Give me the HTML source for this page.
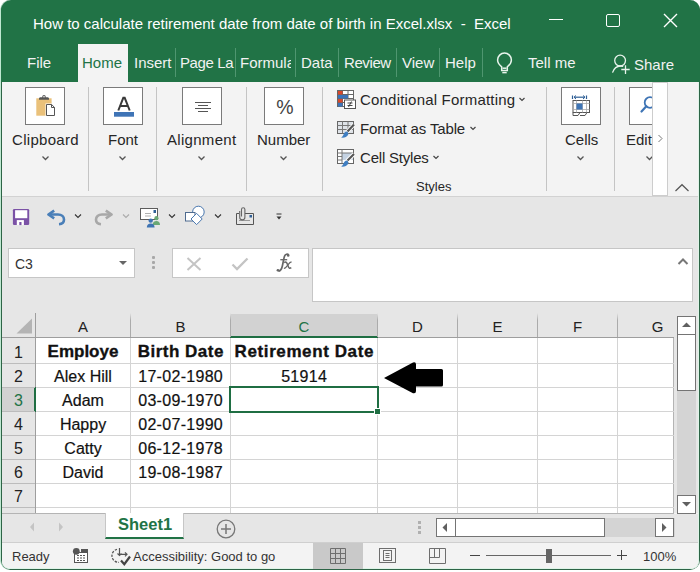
<!DOCTYPE html>
<html><head><meta charset="utf-8">
<style>
*{margin:0;padding:0;box-sizing:border-box}
html,body{width:700px;height:572px;overflow:hidden;background:#fff;font-family:"Liberation Sans",sans-serif}
.a{position:absolute}
.t{position:absolute;white-space:nowrap;line-height:1}
#frame{position:absolute;left:0;top:0;width:700px;height:570px;border-radius:10px;overflow:hidden;background:#2d6446;border-left:1px solid #bfe8d1}
#inner{position:absolute;left:1px;top:0;width:697px;height:569px;border-radius:0 0 7px 7px;overflow:hidden;background:#f3f3f3;border-right:1px solid #dff4e8;border-bottom:1px solid #dff4e8}
#titlebar{position:absolute;left:0;top:0;width:700px;height:82px;background:#217346}
#title{color:#fff;font-size:15px}
.tab{color:#f2f2f2;font-size:15px}
.sep{position:absolute;width:1px;background:#4f9670;top:48px;height:29px}
.rsep{position:absolute;width:1px;background:#c4c4c4;top:87px;height:104px}
.ibox{position:absolute;width:40px;height:38px;border:1px solid #7a7a7a;background:#fff;top:87px}
.ibox svg{position:absolute;left:0;top:0}
.rl{font-size:15px;color:#262626}
.hl{font-size:15px;color:#222;text-align:center}
.rh{font-size:16px;color:#222;text-align:center}
.cell{font-size:16px;color:#111;text-align:center;-webkit-text-stroke:0.2px #111}
.b{font-weight:bold;font-size:17px;-webkit-text-stroke:0.35px #111}
.ls{letter-spacing:0.3px;text-indent:0.3px}
.vl{position:absolute;width:1px;background:#d4d4d4}
.hln{position:absolute;height:1px;background:#d4d4d4}
</style></head><body>
<div id="frame">
<div id="inner">
</div>
</div>

<!-- ===== TITLE BAR ===== -->
<div class="a" style="left:1px;top:0;width:699px;height:82px;background:#217346;border-radius:10px 10px 0 0"></div>
<div class="t" id="title" style="left:33px;top:16px">How to calculate retirement date from date of birth in Excel.xlsx&nbsp; -&nbsp; Excel</div>
<div class="a" style="left:549px;top:19px;width:14px;height:1px;background:#fff"></div>
<div class="a" style="left:606px;top:14px;width:14px;height:13px;border:1.4px solid #fff;border-radius:2px"></div>
<svg class="a" style="left:663px;top:13px" width="15" height="15" viewBox="0 0 15 15"><path d="M1 1L14 14M14 1L1 14" stroke="#fff" stroke-width="1.4"/></svg>

<!-- tabs -->
<div class="t tab" style="left:27px;top:55px">File</div>
<div class="a" style="left:78px;top:44px;width:50px;height:39px;background:#f3f3f3"></div>
<div class="t tab" style="left:82px;top:55px;color:#217346">Home</div>
<div class="t tab" style="left:134px;top:55px">Insert</div>
<div class="sep" style="left:175px"></div>
<div class="t tab" style="left:180px;top:55px;letter-spacing:-0.4px">Page La</div>
<div class="sep" style="left:235px"></div>
<div class="t tab" style="left:240px;top:55px;width:51px;overflow:hidden">Formulas</div>
<div class="sep" style="left:295px"></div>
<div class="t tab" style="left:301px;top:55px">Data</div>
<div class="sep" style="left:338px"></div>
<div class="t tab" style="left:344px;top:55px;letter-spacing:-0.4px">Review</div>
<div class="sep" style="left:396px"></div>
<div class="t tab" style="left:402px;top:55px">View</div>
<div class="sep" style="left:439px"></div>
<div class="t tab" style="left:445px;top:55px">Help</div>
<div class="sep" style="left:482px"></div>
<svg class="a" style="left:490px;top:48px" width="30" height="30" viewBox="0 0 30 30" fill="none" stroke="#e8f4ec" stroke-width="1.5">
  <path d="M11.7 22.5 L11.7 18.8 C9.2 16.8 7.6 14.6 7.6 12 A6.9 6.9 0 0 1 21.4 12 C21.4 14.6 19.8 16.8 17.3 18.8 L17.3 22.5 Z"/>
  <path d="M12.5 20.2 L16.5 20.2"/>
  <path d="M12.3 24.6 L16.7 24.6"/>
</svg>
<div class="t tab" style="left:528px;top:55px">Tell me</div>
<svg class="a" style="left:605px;top:50px" width="30" height="30" viewBox="0 0 30 30" fill="none" stroke="#e8f4ec" stroke-width="1.3">
  <circle cx="15.1" cy="10.6" r="5.4"/>
  <path d="M7.5 22.6 C9 18.5 12 16 15.5 16 C16.5 16 17.4 16.2 18.2 16.5"/>
  <path d="M16.3 19.5 L24.7 19.5 M20.5 15.2 L20.5 23.9"/>
</svg>
<div class="t tab" style="left:634px;top:57px">Share</div>

<!-- ===== RIBBON ===== -->
<div class="a" style="left:2px;top:82px;width:696px;height:114px;background:#f3f3f3"></div>
<div class="a" style="left:2px;top:196px;width:696px;height:1px;background:#d2d2d2"></div>

<div class="ibox" style="left:25px">
  <svg width="40" height="38" viewBox="0 0 40 38">
    <rect x="10.3" y="10.3" width="15.3" height="17.4" fill="#eac17a"/>
    <path d="M13 11.8 L13 10.6 C13 9.6 14 9.2 15 9.2 L16.3 9.2 L16.3 8.6 A1.7 1.7 0 0 1 19.7 8.6 L19.7 9.2 L21 9.2 C22 9.2 23 9.6 23 10.6 L23 11.8 Z" fill="#555"/>
    <circle cx="18" cy="8.7" r="0.8" fill="#fff"/>
    <path d="M19.5 15.5 L26 15.5 L29.5 19 L29.5 28.5 L19.5 28.5 Z" fill="#fff"/>
    <path d="M20.5 16.5 L25.6 16.5 L28.5 19.4 L28.5 27.5 L20.5 27.5 Z" fill="#fff" stroke="#555" stroke-width="1"/>
    <path d="M25.5 16.5 L25.5 19.5 L28.5 19.5" fill="none" stroke="#555" stroke-width="1"/>
  </svg>
</div>
<div class="t rl" style="left:12px;top:132px;letter-spacing:0.3px">Clipboard</div>
<svg class="a" style="left:41px;top:155px" width="9" height="6" viewBox="0 0 9 6"><path d="M1.5 1.5L4.5 4.5L7.5 1.5" fill="none" stroke="#555" stroke-width="1.3"/></svg>
<div class="rsep" style="left:88px"></div>

<div class="ibox" style="left:103px">
  <svg width="40" height="38" viewBox="0 0 40 38">
    <path d="M14.3 22.5L19.3 9.8H20.7L25.7 22.5M16.2 18H23.8" fill="none" stroke="#3a3a3a" stroke-width="2"/>
    <rect x="10" y="24" width="20" height="4.7" fill="#3f74b6"/>
  </svg>
</div>
<div class="t rl" style="left:108px;top:132px">Font</div>
<svg class="a" style="left:118px;top:155px" width="9" height="6" viewBox="0 0 9 6"><path d="M1.5 1.5L4.5 4.5L7.5 1.5" fill="none" stroke="#555" stroke-width="1.3"/></svg>
<div class="rsep" style="left:156px"></div>

<div class="ibox" style="left:182px">
  <svg width="40" height="38" viewBox="0 0 40 38" stroke="#555" stroke-width="1">
    <path d="M12 14.5H28M15 17.5H25M12 20.5H28M15 23.5H25"/>
  </svg>
</div>
<div class="t rl" style="left:167px;top:132px;letter-spacing:0.3px">Alignment</div>
<svg class="a" style="left:197px;top:155px" width="9" height="6" viewBox="0 0 9 6"><path d="M1.5 1.5L4.5 4.5L7.5 1.5" fill="none" stroke="#555" stroke-width="1.3"/></svg>
<div class="rsep" style="left:246px"></div>

<div class="ibox" style="left:264px">
  <svg width="40" height="38" viewBox="0 0 40 38">
    <text x="20" y="25.8" font-family="Liberation Sans" font-size="19.5" fill="#444" text-anchor="middle">%</text>
  </svg>
</div>
<div class="t rl" style="left:257px;top:132px">Number</div>
<svg class="a" style="left:279px;top:155px" width="9" height="6" viewBox="0 0 9 6"><path d="M1.5 1.5L4.5 4.5L7.5 1.5" fill="none" stroke="#555" stroke-width="1.3"/></svg>
<div class="rsep" style="left:322px"></div>

<!-- styles -->
<svg class="a" style="left:336px;top:89px" width="21" height="21" viewBox="0 0 21 21">
  <rect x="1.5" y="1.5" width="16" height="16" fill="#fff" stroke="#666"/>
  <path d="M1.5 5.5H17.5M1.5 9.5H17.5M1.5 13.5H8M6.5 1.5V17.5M12 1.5V9" stroke="#666" fill="none"/>
  <rect x="2" y="2" width="4.5" height="3.5" fill="#d9472b"/>
  <rect x="2" y="6" width="10" height="3.5" fill="#3b73b9"/>
  <rect x="2" y="10" width="4.5" height="3.5" fill="#d9472b"/>
  <rect x="2" y="14" width="4.5" height="3.5" fill="#3b73b9"/>
  <rect x="8.5" y="11" width="11" height="8.5" fill="#fff" stroke="#555"/>
  <path d="M11.5 14H16.5M11.5 16.5H16.5M15.5 12.5L12.5 18" stroke="#333" stroke-width="0.9"/>
</svg>
<div class="t rl" style="left:360px;top:92px;letter-spacing:0.2px">Conditional Formatting</div>
<svg class="a" style="left:518px;top:97px" width="8" height="5" viewBox="0 0 8 5"><path d="M1.5 1L4 3.5L6.5 1" fill="none" stroke="#444" stroke-width="1.2"/></svg>

<svg class="a" style="left:336px;top:120px" width="21" height="19" viewBox="0 0 21 19">
  <rect x="1.5" y="1.5" width="16" height="12" fill="#dfe3e8" stroke="#666"/>
  <path d="M1.5 5.5H17.5M1.5 9.5H17.5M6.5 1.5V13.5M12 1.5V13.5" stroke="#777" fill="none"/>
  <path d="M18 4.5L11 12" stroke="#fff" stroke-width="4"/>
  <path d="M18 4.5L11.5 11.5" stroke="#555" stroke-width="2.2"/>
  <path d="M11 11.5C9 11.5 8 13 7.5 14.5C7 16 6 17 5 17.5C8 18 11 17 12 15C12.6 14 12.4 12.4 11 11.5Z" fill="#3f7ec1"/>
</svg>
<div class="t rl" style="left:360px;top:121px;letter-spacing:-0.15px">Format as Table</div>
<svg class="a" style="left:469px;top:126px" width="8" height="5" viewBox="0 0 8 5"><path d="M1.5 1L4 3.5L6.5 1" fill="none" stroke="#444" stroke-width="1.2"/></svg>

<svg class="a" style="left:336px;top:148px" width="21" height="20" viewBox="0 0 21 20">
  <rect x="1.5" y="1.5" width="16" height="14" fill="#fff" stroke="#666"/>
  <rect x="6" y="5" width="11" height="7" fill="#c5d3e3"/>
  <path d="M1.5 5H17.5M1.5 8.5H6M1.5 12H6M6 1.5V15.5M12 12V15.5" stroke="#777" fill="none"/>
  <path d="M18 6L11 13" stroke="#fff" stroke-width="4"/>
  <path d="M18 6L11.5 12.5" stroke="#555" stroke-width="2.2"/>
  <path d="M11 12.5C9 12.5 8 14 7.5 15.5C7 17 6 18 5 18.5C8 19 11 18 12 16C12.6 15 12.4 13.4 11 12.5Z" fill="#3f7ec1"/>
</svg>
<div class="t rl" style="left:360px;top:150px;letter-spacing:-0.2px">Cell Styles</div>
<svg class="a" style="left:432px;top:155px" width="8" height="5" viewBox="0 0 8 5"><path d="M1.5 1L4 3.5L6.5 1" fill="none" stroke="#444" stroke-width="1.2"/></svg>
<div class="t rl" style="left:416px;top:180px;font-size:13px">Styles</div>
<div class="rsep" style="left:546px"></div>

<div class="ibox" style="left:561px">
  <svg style="left:-1px;top:-1px" width="40" height="38" viewBox="0 0 40 38">
    <path d="M11.5 8.5V12M25.5 8.5V12" stroke="#2f5f96" stroke-width="1.2"/>
    <path d="M13 10.2H24" stroke="#2f5f96" stroke-width="1.2"/>
    <path d="M13 10.2L15 8.5M13 10.2L15 12M24 10.2L22 8.5M24 10.2L22 12" stroke="#2f5f96" stroke-width="1"/>
    <rect x="12" y="13.5" width="16.5" height="12" fill="#fff" stroke="#555"/>
    <path d="M12 16.5H28.5M12 22.5H28.5M15.5 13.5V25.5M21.5 13.5V25.5M25.5 13.5V25.5" stroke="#aaa" stroke-width="0.8"/>
    <rect x="15.5" y="16.5" width="6" height="6" fill="#3f75b5"/>
    <path d="M12 25.5L12 28.5L17 28.5L19 25.5M19 28.5L24 28.5L26 25.5" stroke="#555" fill="none"/>
  </svg>
</div>
<div class="t rl" style="left:565px;top:132px">Cells</div>
<svg class="a" style="left:576px;top:155px" width="9" height="6" viewBox="0 0 9 6"><path d="M1.5 1.5L4.5 4.5L7.5 1.5" fill="none" stroke="#555" stroke-width="1.3"/></svg>
<div class="rsep" style="left:614px"></div>

<div class="ibox" style="left:629px;width:30px;border-right:none">
  <svg width="30" height="38" viewBox="0 0 30 38">
    <circle cx="20" cy="14.5" r="5.3" fill="none" stroke="#3f75b5" stroke-width="1.8"/>
    <path d="M16.3 18.3L11.5 23.5" stroke="#3f75b5" stroke-width="2.2" stroke-linecap="round"/>
  </svg>
</div>
<div class="t rl" style="left:626px;top:132px">Edit</div>
<svg class="a" style="left:645px;top:155px" width="9" height="6" viewBox="0 0 9 6"><path d="M1.5 1.5L4.5 4.5L7.5 1.5" fill="none" stroke="#555" stroke-width="1.3"/></svg>
<div class="a" style="left:652px;top:82px;width:16px;height:114px;background:#fff;border:1px solid #cdcdcd"></div>
<svg class="a" style="left:656px;top:133px" width="9" height="11" viewBox="0 0 9 11"><path d="M2.5 2L6 5.5L2.5 9" fill="none" stroke="#777" stroke-width="1"/></svg>
<svg class="a" style="left:673px;top:182px" width="18" height="11" viewBox="0 0 18 11"><path d="M2.5 9L9 2.7L15.5 9" fill="none" stroke="#555" stroke-width="1.2"/></svg>

<!-- ===== QAT / FORMULA ===== -->
<div class="a" style="left:2px;top:197px;width:696px;height:316px;background:#e6e6e6"></div>
<svg class="a" style="left:12px;top:208px" width="18" height="18" viewBox="0 0 18 18">
  <rect x="0.9" y="0.9" width="16.3" height="16.2" rx="1.3" fill="#7b52a6"/>
  <rect x="3.1" y="2.2" width="12.2" height="8" fill="#fff"/>
  <rect x="4.8" y="12.1" width="7.1" height="5" fill="#fff"/>
  <rect x="7.3" y="14" width="2.2" height="3.1" fill="#7b52a6"/>
</svg>
<svg class="a" style="left:45px;top:208px" width="22" height="19" viewBox="0 0 22 19">
  <path d="M9.2 2.6L3.4 6.5L9.2 10.4" fill="none" stroke="#4a7fb8" stroke-width="2.6" stroke-linejoin="round"/>
  <path d="M4 6.5H13C16.8 6.5 19 8.7 19 11.5C19 14.3 17 16 14 16.2" fill="none" stroke="#4a7fb8" stroke-width="2.6"/>
</svg>
<svg class="a" style="left:74px;top:213px" width="8" height="6" viewBox="0 0 8 6"><path d="M1 1.5L4 4.5L7 1.5" fill="none" stroke="#333" stroke-width="1.1"/></svg>
<svg class="a" style="left:93px;top:208px" width="22" height="19" viewBox="0 0 22 19">
  <path d="M12.8 2.6L18.6 6.5L12.8 10.4" fill="none" stroke="#a8a8a8" stroke-width="2.6" stroke-linejoin="round"/>
  <path d="M18 6.5H9C5.2 6.5 3 8.7 3 11.5C3 14.3 5 16 8 16.2" fill="none" stroke="#a8a8a8" stroke-width="2.6"/>
</svg>
<svg class="a" style="left:122px;top:213px" width="8" height="6" viewBox="0 0 8 6"><path d="M1 1.5L4 4.5L7 1.5" fill="none" stroke="#aaa" stroke-width="1.1"/></svg>
<svg class="a" style="left:138px;top:206px" width="24" height="22" viewBox="0 0 24 22">
  <rect x="2.5" y="2.5" width="17" height="11" fill="#fff" stroke="#5c5c5c"/>
  <path d="M7 7.5H13M7 10H13" stroke="#b0b0b0"/>
  <rect x="15.5" y="4" width="2.5" height="3" fill="#2f5f96"/>
  <circle cx="18.4" cy="12.2" r="2.1" fill="#6aa874"/>
  <path d="M14.6 19C14.6 16.3 16.2 15 18.4 15C20.6 15 22 16.3 22 19Z" fill="#6aa874"/>
  <circle cx="12.7" cy="14.6" r="2.2" fill="#3f74b3"/>
  <path d="M8.8 21.5C8.8 18.8 10.5 17.5 12.7 17.5C14.9 17.5 16.6 18.8 16.6 21.5Z" fill="#3f74b3"/>
</svg>
<svg class="a" style="left:168px;top:213px" width="8" height="6" viewBox="0 0 8 6"><path d="M1 1.5L4 4.5L7 1.5" fill="none" stroke="#333" stroke-width="1.1"/></svg>
<svg class="a" style="left:183px;top:205px" width="24" height="23" viewBox="0 0 24 23">
  <circle cx="15.4" cy="7" r="5.8" fill="#fff" stroke="#4a78b0" stroke-width="1"/>
  <rect x="2.5" y="7.5" width="9.5" height="8.5" fill="#fff" stroke="#4f6b8f" stroke-width="1"/>
  <path d="M13.6 8.4L19.2 14L13.6 19.6L8 14Z" fill="#fff" stroke="#4a78b0" stroke-width="1"/>
</svg>
<svg class="a" style="left:214px;top:213px" width="8" height="6" viewBox="0 0 8 6"><path d="M1 1.5L4 4.5L7 1.5" fill="none" stroke="#333" stroke-width="1.1"/></svg>
<svg class="a" style="left:234px;top:205px" width="22" height="21" viewBox="0 0 22 21">
  <path d="M5 8.5H2.5V19.5H19.5V8.5H11" fill="none" stroke="#555"/>
  <path d="M5 15.5H16" stroke="#999"/>
  <rect x="15.5" y="10" width="2.5" height="2.5" fill="#2f5f96"/>
  <path d="M7.5 11.5V4.5A1.7 1.7 0 0 1 10.9 4.5V12.3A2.6 2.6 0 0 1 5.7 12.3V6" fill="none" stroke="#666" stroke-width="1.1"/>
</svg>
<svg class="a" style="left:275px;top:212px" width="8" height="9" viewBox="0 0 8 9"><path d="M1.5 2H6.5" stroke="#333" stroke-width="1"/><path d="M1.5 4.5L4 7.5L6.5 4.5Z" fill="#333"/></svg>

<!-- name box -->
<div class="a" style="left:8px;top:248px;width:127px;height:30px;background:#fff;border:1px solid #c6c6c6"></div>
<div class="t" style="left:15px;top:257px;font-size:14px;color:#333">C3</div>
<svg class="a" style="left:118px;top:260px" width="10" height="6" viewBox="0 0 10 6"><path d="M1 1H9L5 5Z" fill="#666"/></svg>
<div class="a" style="left:152px;top:256px;width:3px;height:3px;border-radius:1px;background:#a8a8a8"></div>
<div class="a" style="left:152px;top:261px;width:3px;height:3px;border-radius:1px;background:#a8a8a8"></div>
<div class="a" style="left:152px;top:266px;width:3px;height:3px;border-radius:1px;background:#a8a8a8"></div>
<div class="a" style="left:172px;top:248px;width:137px;height:30px;background:#fff;border:1px solid #c6c6c6"></div>
<svg class="a" style="left:186px;top:257px" width="16" height="14" viewBox="0 0 16 14"><path d="M1.5 1L14.5 13M14.5 1L1.5 13" stroke="#c4c4c4" stroke-width="2"/></svg>
<svg class="a" style="left:231px;top:257px" width="18" height="14" viewBox="0 0 18 14"><path d="M1.5 7.5L6 12L16.5 1.5" fill="none" stroke="#c4c4c4" stroke-width="2.3"/></svg>
<svg class="a" style="left:272px;top:250px" width="24" height="24" viewBox="0 0 24 24">
  <path d="M16.6 5.2 C15.8 3.6 13.3 3.8 12.4 6.6 C11.7 8.8 11.1 12.6 10.3 16.3 C9.6 19.4 8.3 21.1 6.4 21.1" stroke="#666" stroke-width="1.7" fill="none"/>
  <circle cx="16.2" cy="5.5" r="1.3" fill="#666"/>
  <circle cx="5.9" cy="20.2" r="1.3" fill="#666"/>
  <path d="M8.3 9.7H15.2" stroke="#666" stroke-width="1.3"/>
  <path d="M12.2 12.6C13.6 11.6 14.8 12.1 15.4 14.2L16.5 17C17 18.3 17.9 18.6 19.3 17.6" stroke="#666" stroke-width="1.5" fill="none"/>
  <path d="M19.6 12.2C18.6 12 17.8 12.6 17.2 13.3L14.3 16.8C13.6 17.7 12.9 18.4 11.9 18.2" stroke="#666" stroke-width="1.3" fill="none"/>
</svg>
<div class="a" style="left:312px;top:248px;width:381px;height:54px;background:#fff;border:1px solid #c6c6c6"></div>
<svg class="a" style="left:677px;top:257px" width="12" height="9" viewBox="0 0 12 9"><path d="M1.5 7L6 2.5L10.5 7" fill="none" stroke="#777" stroke-width="2"/></svg>

<!-- ===== GRID ===== -->
<div class="a" style="left:36px;top:338px;width:638px;height:175px;background:#fff"></div>
<!-- headers -->
<div class="a" style="left:231px;top:314px;width:146px;height:23px;background:#d2d2d2"></div>
<div class="a" style="left:2px;top:387px;width:33px;height:24px;background:#d2d2d2"></div>
<svg class="a" style="left:16px;top:318px" width="17" height="16" viewBox="0 0 17 16"><path d="M16 0.5V15.5H0.5Z" fill="#b4b4b4"/></svg>
<div class="a" style="left:2px;top:337px;width:672px;height:1px;background:#9e9e9e"></div>
<div class="a" style="left:35px;top:313px;width:1px;height:200px;background:#9e9e9e"></div>
<div class="a" style="left:230px;top:336px;width:148px;height:2px;background:#1f6e43"></div>
<div class="a" style="left:34px;top:387px;width:2px;height:25px;background:#1f6e43"></div>
<!-- header col lines -->
<div class="a" style="left:130px;top:313px;width:1px;height:24px;background:linear-gradient(#e6e6e6,#ababab 30%)"></div>
<div class="a" style="left:230px;top:313px;width:1px;height:24px;background:linear-gradient(#e6e6e6,#ababab 30%)"></div>
<div class="a" style="left:377px;top:313px;width:1px;height:24px;background:linear-gradient(#e6e6e6,#ababab 30%)"></div>
<div class="a" style="left:457px;top:313px;width:1px;height:24px;background:linear-gradient(#e6e6e6,#ababab 30%)"></div>
<div class="a" style="left:537px;top:313px;width:1px;height:24px;background:linear-gradient(#e6e6e6,#ababab 30%)"></div>
<div class="a" style="left:617px;top:313px;width:1px;height:24px;background:linear-gradient(#e6e6e6,#ababab 30%)"></div>
<!-- row header lines -->
<div class="a" style="left:2px;top:363px;width:33px;height:1px;background:#bcbcbc"></div>
<div class="a" style="left:2px;top:387px;width:33px;height:1px;background:#bcbcbc"></div>
<div class="a" style="left:2px;top:411px;width:33px;height:1px;background:#bcbcbc"></div>
<div class="a" style="left:2px;top:435px;width:33px;height:1px;background:#bcbcbc"></div>
<div class="a" style="left:2px;top:459px;width:33px;height:1px;background:#bcbcbc"></div>
<div class="a" style="left:2px;top:483px;width:33px;height:1px;background:#bcbcbc"></div>
<div class="a" style="left:2px;top:507px;width:33px;height:1px;background:#bcbcbc"></div>
<!-- cell grid lines -->
<div class="vl" style="left:130px;top:338px;height:175px"></div>
<div class="vl" style="left:230px;top:338px;height:175px"></div>
<div class="vl" style="left:377px;top:338px;height:175px"></div>
<div class="vl" style="left:457px;top:338px;height:175px"></div>
<div class="vl" style="left:537px;top:338px;height:175px"></div>
<div class="vl" style="left:617px;top:338px;height:175px"></div>
<div class="vl" style="left:673px;top:338px;height:175px;background:#b4b4b4"></div>
<div class="hln" style="left:36px;top:363px;width:638px"></div>
<div class="hln" style="left:36px;top:387px;width:638px"></div>
<div class="hln" style="left:36px;top:411px;width:638px"></div>
<div class="hln" style="left:36px;top:435px;width:638px"></div>
<div class="hln" style="left:36px;top:459px;width:638px"></div>
<div class="hln" style="left:36px;top:483px;width:638px"></div>
<div class="hln" style="left:36px;top:507px;width:638px"></div>

<!-- col letters -->
<div class="t hl" style="left:36px;top:319px;width:94px">A</div>
<div class="t hl" style="left:131px;top:319px;width:99px">B</div>
<div class="t hl" style="left:231px;top:319px;width:146px;color:#217346">C</div>
<div class="t hl" style="left:378px;top:319px;width:79px">D</div>
<div class="t hl" style="left:458px;top:319px;width:79px">E</div>
<div class="t hl" style="left:538px;top:319px;width:79px">F</div>
<div class="t hl" style="left:618px;top:319px;width:79px">G</div>
<!-- row numbers -->
<div class="t rh" style="left:2px;top:345px;width:33px">1</div>
<div class="t rh" style="left:2px;top:369px;width:33px">2</div>
<div class="t rh" style="left:2px;top:393px;width:33px;color:#217346">3</div>
<div class="t rh" style="left:2px;top:417px;width:33px">4</div>
<div class="t rh" style="left:2px;top:441px;width:33px">5</div>
<div class="t rh" style="left:2px;top:465px;width:33px">6</div>
<div class="t rh" style="left:2px;top:489px;width:33px">7</div>

<!-- cells -->
<div class="t cell b" style="left:36px;top:343px;width:94px;overflow:hidden">Employe</div>
<div class="t cell b" style="left:131px;top:343px;width:99px;letter-spacing:0.5px;text-indent:0.5px">Birth Date</div>
<div class="t cell b" style="left:231px;top:343px;width:146px;letter-spacing:0.6px;text-indent:0.6px">Retirement Date</div>
<div class="t cell" style="left:36px;top:369px;width:94px">Alex Hill</div>
<div class="t cell" style="left:36px;top:393px;width:94px">Adam</div>
<div class="t cell" style="left:36px;top:417px;width:94px">Happy</div>
<div class="t cell" style="left:36px;top:441px;width:94px">Catty</div>
<div class="t cell" style="left:36px;top:465px;width:94px">David</div>
<div class="t cell ls" style="left:131px;top:369px;width:99px">17-02-1980</div>
<div class="t cell ls" style="left:131px;top:393px;width:99px">03-09-1970</div>
<div class="t cell ls" style="left:131px;top:417px;width:99px">02-07-1990</div>
<div class="t cell ls" style="left:131px;top:441px;width:99px">06-12-1978</div>
<div class="t cell ls" style="left:131px;top:465px;width:99px">19-08-1987</div>
<div class="t cell ls" style="left:231px;top:369px;width:146px">51914</div>
<!-- selection -->
<div class="a" style="left:229px;top:386px;width:150px;height:27px;border:2px solid #1f6e43"></div>
<div class="a" style="left:374px;top:408px;width:7px;height:7px;background:#1f6e43;border:1px solid #fff"></div>
<!-- arrow -->
<svg class="a" style="left:380px;top:358px" width="68" height="40" viewBox="0 0 68 40">
  <path d="M4 20 L33 4.5 Q36 3.5 36 6.5 L36 11 L61.5 11 Q63 11 63 12.5 L63 27 Q63 28.5 61.5 28.5 L36 28.5 L36 33 Q36 36 33 35.2 Z" fill="#000"/>
</svg>

<!-- v scroll -->
<div class="a" style="left:677px;top:316px;width:19px;height:19px;background:#fff;border:1px solid #747474"></div>
<svg class="a" style="left:681px;top:321px" width="11" height="7" viewBox="0 0 11 7"><path d="M1 6H10L5.5 1.5Z" fill="#606060"/></svg>
<div class="a" style="left:677px;top:335px;width:19px;height:161px;background:#d4d4d4"></div>
<div class="a" style="left:677px;top:334px;width:19px;height:57px;background:#fff;border:1px solid #747474"></div>
<div class="a" style="left:677px;top:495px;width:19px;height:19px;background:#fff;border:1px solid #747474;z-index:2"></div>
<svg class="a" style="z-index:3;left:681px;top:501px" width="11" height="7" viewBox="0 0 11 7"><path d="M1 1H10L5.5 5.5Z" fill="#606060"/></svg>

<!-- ===== SHEET TAB BAR ===== -->
<div class="a" style="left:2px;top:514px;width:696px;height:28px;background:#e6e6e6"></div>
<div class="a" style="left:2px;top:513px;width:672px;height:1px;background:#b4b4b4"></div>
<svg class="a" style="left:28px;top:521px" width="8" height="12" viewBox="0 0 8 12"><path d="M6 1.5L2 6L6 10.5Z" fill="#c4c4c4"/></svg>
<svg class="a" style="left:57px;top:521px" width="8" height="12" viewBox="0 0 8 12"><path d="M2 1.5L6 6L2 10.5Z" fill="#c4c4c4"/></svg>
<div class="a" style="left:105px;top:513px;width:79px;height:26px;background:#fff;border-left:1px solid #c6c6c6;border-right:1px solid #c6c6c6;border-bottom:2px solid #217346"></div>
<div class="t" style="left:118px;top:516px;font-size:16.5px;font-weight:bold;color:#217346">Sheet1</div>
<svg class="a" style="left:215px;top:519px" width="22" height="20" viewBox="0 0 22 20"><circle cx="11" cy="10" r="8.8" fill="none" stroke="#777" stroke-width="1.3"/><path d="M11 5V15M6 10H16" stroke="#777" stroke-width="1.5"/></svg>
<div class="a" style="left:418px;top:521px;width:3px;height:3px;background:#b0b0b0"></div>
<div class="a" style="left:418px;top:526px;width:3px;height:3px;background:#b0b0b0"></div>
<div class="a" style="left:418px;top:531px;width:3px;height:3px;background:#b0b0b0"></div>
<div class="a" style="left:436px;top:518px;width:239px;height:19px;background:#d4d4d4"></div>
<div class="a" style="left:436px;top:518px;width:20px;height:19px;background:#fff;border:1px solid #747474"></div>
<svg class="a" style="left:441px;top:522px" width="8" height="11" viewBox="0 0 8 11"><path d="M6 1L1.5 5.5L6 10Z" fill="#606060"/></svg>
<div class="a" style="left:455px;top:518px;width:150px;height:19px;background:#fff;border:1px solid #747474"></div>
<div class="a" style="left:655px;top:518px;width:19px;height:19px;background:#fff;border:1px solid #747474"></div>
<svg class="a" style="left:660px;top:522px" width="8" height="11" viewBox="0 0 8 11"><path d="M2 1L6.5 5.5L2 10Z" fill="#606060"/></svg>

<!-- ===== STATUS BAR ===== -->
<div class="a" style="left:2px;top:542px;width:696px;height:1px;background:#cfcfcf"></div>
<div class="a" style="left:2px;top:543px;width:696px;height:25px;background:#f3f3f3;border-radius:0 0 7px 7px"></div>
<div class="t" style="left:12px;top:550px;font-size:13px;color:#333">Ready</div>
<svg class="a" style="left:68px;top:544px" width="24" height="22" viewBox="0 0 24 22">
  <rect x="6.5" y="8.5" width="13" height="10" fill="#fff" stroke="#555"/>
  <rect x="13" y="5" width="7" height="3.5" fill="#555"/>
  <circle cx="8.3" cy="7.3" r="3.4" fill="#555"/>
  <path d="M9 11.5H11M12 11.5H14M15 11.5H17M9 14H11M12 14H14M15 14H17M9 16.5H11M12 16.5H14M15 16.5H17" stroke="#555"/>
</svg>
<svg class="a" style="left:108px;top:545px" width="26" height="22" viewBox="0 0 26 22">
  <path d="M9 4.3A6.6 6.6 0 0 0 11 17.3" fill="none" stroke="#555" stroke-width="1.3" stroke-dasharray="2.4 1.3"/>
  <path d="M11.5 3V10.5M9.5 8.5L11.5 10.5L13.5 8.5M11.5 9.3H19M17 7.3L19 9.3L17 11.3" fill="none" stroke="#555" stroke-width="1.2"/>
  <path d="M13 15.5L16.3 19.2L22 11.5" fill="none" stroke="#444" stroke-width="2.2"/>
</svg>
<div class="t" style="left:133px;top:550px;font-size:13px;color:#333">Accessibility: Good to go</div>
<div class="a" style="left:313px;top:543px;width:50px;height:26px;background:#c9c9c9"></div>
<svg class="a" style="left:329px;top:547px" width="18" height="18" viewBox="0 0 18 18"><path d="M1.5 1.5H16.5V16.5H1.5ZM6.5 1.5V16.5M11.5 1.5V16.5M1.5 6.5H16.5M1.5 11.5H16.5" fill="none" stroke="#6e6e6e"/></svg>
<svg class="a" style="left:378px;top:547px" width="19" height="18" viewBox="0 0 19 18"><rect x="1.5" y="1.5" width="16" height="14" fill="none" stroke="#6e6e6e"/><rect x="5.5" y="3.5" width="8" height="10" fill="none" stroke="#6e6e6e"/><path d="M7.5 6.5H11.5M7.5 8.5H11.5M7.5 10.5H11.5" stroke="#6e6e6e"/></svg>
<svg class="a" style="left:428px;top:547px" width="19" height="18" viewBox="0 0 19 18"><path d="M1.5 1.5H17.5V16.5H1.5ZM1.5 10.5H11.5V1.5M6.5 1.5V10.5" fill="none" stroke="#6e6e6e"/></svg>
<div class="a" style="left:470px;top:555px;width:10px;height:1px;background:#444"></div>
<div class="a" style="left:486px;top:555px;width:125px;height:1px;background:#666"></div>
<div class="a" style="left:546px;top:549px;width:6px;height:14px;background:#666"></div>
<div class="a" style="left:617px;top:555px;width:10px;height:1px;background:#444"></div>
<div class="a" style="left:621px;top:550px;width:1px;height:10px;background:#444"></div>
<div class="t" style="left:643px;top:550px;font-size:13px;color:#333">100%</div>
</body></html>
